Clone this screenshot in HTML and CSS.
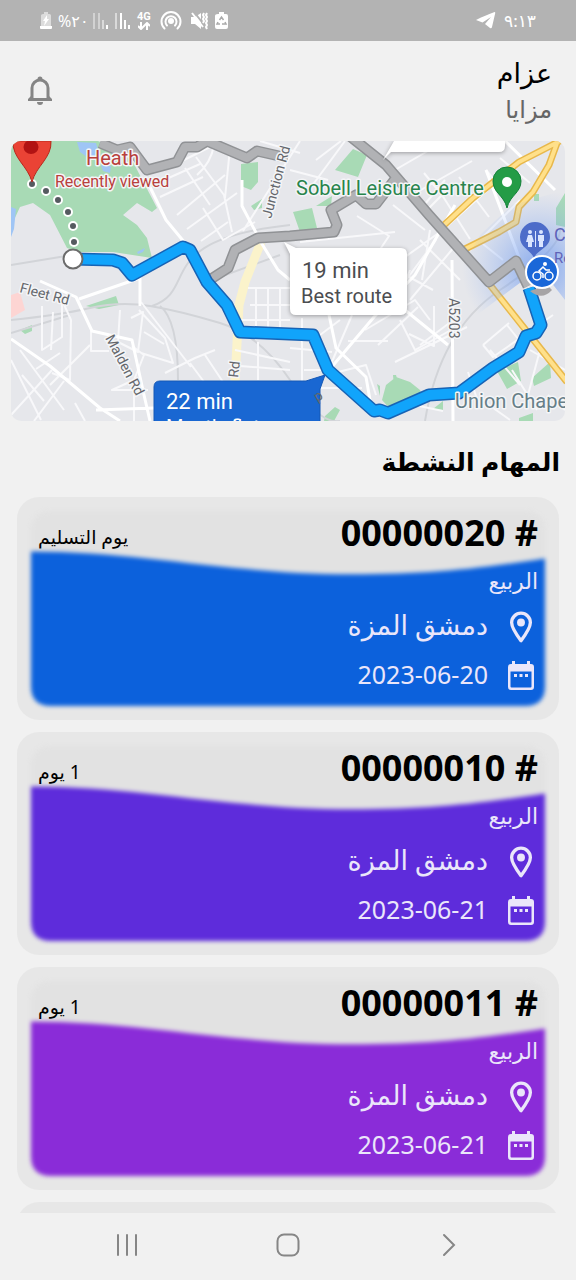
FILE: index.html
```html
<!DOCTYPE html>
<html lang="ar" dir="rtl">
<head>
<meta charset="utf-8">
<meta name="viewport" content="width=device-width, initial-scale=1">
<title>المهام النشطة</title>
<link rel="stylesheet" href="styles.css">
</head>
<body>
<svg class="defs" width="0" height="0" aria-hidden="true">
  <defs>
    <symbol id="pin" viewBox="1 1 22 29"><path fill="none" stroke="currentColor" stroke-width="3" stroke-linejoin="round" d="M12 28C6 20 3.500 15.500 3.500 11.500a8.500 8.500 0 0 1 17 0C20.500 15.500 18 20 12 28z"/><circle cx="12" cy="11.500" r="3.600" fill="currentColor"/></symbol>
    <symbol id="calendar" viewBox="0 0 28 32"><path fill="currentColor" fill-rule="evenodd" d="M4 4H5V1h3v3h12V1h3v3h1a3 3 0 0 1 3 3v20a3 3 0 0 1-3 3H4a3 3 0 0 1-3-3V7a3 3 0 0 1 3-3zM3.500 11.500v15a1 1 0 0 0 1 1h19a1 1 0 0 0 1-1v-15zM7 14h3v3H7zM12.500 14h3v3h-3zM18 14h3v3h-3z"/></symbol>
    <symbol id="wave" viewBox="0 0 514 197" preserveAspectRatio="none"><path fill="currentColor" d="M0 41C110 41 200 64 320 64C400 64 450 58 514 48V177Q514 197 494 197H20Q0 197 0 177Z"/></symbol>
    <symbol id="bars" viewBox="0 0 16 18"><path fill="#dadada" d="M0 1h2v16H0zM5 1h2v16H5z" opacity=".8"/><path fill="#dadada" d="M9 8h2v9H9z"/><path fill="#fff" d="M13 13h2v4h-2z"/></symbol>
  </defs>
</svg>
<div class="status">
  <div class="status-icons">
    <svg width="12" height="18" viewBox="0 0 12 18"><path fill="#dcdcdc" d="M3 2h1V0h4v2h1.500Q11 2 11 3.500V14H1V3.500Q1 2 3 2z"/><path fill="#fff" d="M0 14h12v2q0 1-1 1H1q-1 0-1-1zM7 3 3 9h2l-1 5 5-7H7z"/></svg>
    <span class="battery-level">%٢٠</span>
    <svg width="16" height="18"><use href="#bars"/></svg>
    <svg width="16" height="18" viewBox="0 0 16 18"><path fill="#dadada" d="M0 1h2v16H0z"/><path fill="#fff" d="M5 1h2v16H5zM9 8h2v9H9zM13 13h2v4h-2z"/></svg>
    <div class="network"><span>4G</span><svg width="12" height="8" viewBox="0 0 12 8"><path fill="none" stroke="#fff" stroke-width="2" d="M3 0v6M0 4l3 3 3-3M9 8V2M6 4l3-3 3 3"/></svg></div>
    <svg class="hotspot" width="22" height="20" viewBox="0 0 22 20"><circle cx="11" cy="10" r="3" fill="#fff"/><path fill="none" stroke="#fff" stroke-width="2" stroke-linecap="round" d="M7 14.500a5.500 5.500 0 1 1 8 0M4.500 17.500a9.500 9.500 0 1 1 13 0"/></svg>
    <svg width="18" height="18" viewBox="0 0 18 18"><path fill="#fff" d="M0 5h4L10 1v16l-6-5H0z"/><path stroke="#b3b3b3" stroke-width="2" d="M3 0l11 14"/><path fill="none" stroke="#fff" stroke-width="2" d="M1 1l11 14M13 1l-1 2 1 2-1 2 1 2-1 2M16 1l-1 2 1 2-1 2 1 2-1 2 1 2-1 2 1 2"/></svg>
    <svg width="13" height="18" viewBox="0 0 13 18"><path fill="#fff" d="M3 2h1V0h5v2h2q2 0 2 2v11q0 2-2 2H2q-2 0-2-2V4q0-2 3-2z"/><path fill="none" stroke="#aaa" stroke-width="1.500" d="M4.500 8l2-3 2 3M3 10l-1 2h3M10 10l1 2H7"/></svg>
  </div>
  <div class="status-time">
    <svg width="20" height="17" viewBox="0 0 20 17"><path fill="#fff" d="M0 8Q1 7 18 .2q1.500-.4 1.200 1L16 15q-.5 2-2 1l-5-4 6-7-8.500 5.500z"/></svg>
    <span>٩:١٣</span>
  </div>
</div>

<header class="top">
  <div class="who">
    <div class="name">عزام</div>
    <div class="company">مزايا</div>
  </div>
  <button class="bell" type="button" aria-label="الإشعارات">
    <svg width="26" height="30" viewBox="0 0 26 30"><path fill="none" stroke="#858585" stroke-width="3" d="M5 24V12a8 8 0 0 1 16 0v12"/><path fill="#858585" d="M10.500 4V3a2.500 2.500 0 0 1 5 0v1zM4 20l-3 3v2h24v-2l-3-3v2H4zM10 26h6a3 3 0 0 1-6 0z"/></svg>
  </button>
</header>

<div class="map">
<svg viewBox="11 141 554 280" direction="ltr" role="img" aria-label="Map">
  <defs><radialGradient id="here" gradientUnits="userSpaceOnUse" cx="540" cy="268" r="78"><stop offset="0" stop-color="#5b8def" stop-opacity=".7"/><stop offset="1" stop-color="#8fb2f5" stop-opacity="0"/></radialGradient></defs>
  <path fill="#e6e7eb" d="M11 141h554v280H11z"/>
  <g fill="#a8dab5">
    <path d="M11 141H98L118 150L133 162L157 208L152 212L137 203L123 215L137 225L147 238L152 258L113 252H80L67 248L50 215L33 203L20 207L13 222L11 235z"/>
    <path d="M241 164L258 162V182L251 190L241 186zM251 206L262 199V208L254 210zM353 149L367 155L358 177L335 170zM293 212L312 208L317 228L300 232zM316 206L332 196 331 206zM86 306l30-10 3 9-20 4zM20 330l12-5v6l-7 3z"/>
    <path d="M382 400l4-15 10-8 14 5 10 8 3 8-30 14zM497 371l21-9 3 19-14 8zM532 378l18-16 1 16-17 8zM519 418l14-5v8h-14zM325 416l10-9 5 3-6 11h-10zM556 208l9-15v34l-9-2zM534 194h5v7h-5zM380 386l-3-2 3 12zM393 375l3 0 3 10-5 2zM433 409l10-8v9z"/>
  </g>
  <path fill="#9fc5f5" d="M77 142l19 1 3 10-8 7-11-8zM101 165l10 1-1 7-7-2zM11 207l5 2-2 20-3 8zM137 252l8-4-2 4-5 2z"/>
  <path fill="#fdd5d3" d="M11 295l9-3 5 18-14 8z"/>
  <g fill="none" stroke="#d2d4d8" stroke-width="2">
    <path d="M11 320Q60 315 90 308T150 306T220 323T290 380T340 421M11 265L66 256M152 306C200 290 150 240 290 225M11 333L70 315M160 306Q178 320 178 380M425 421Q440 330 500 290T560 230M220 277l60-22"/>
  </g>
  <path fill="none" stroke="#fbf3cb" stroke-width="9" d="M261 242L245 282L239 305L235 381"/>
  <g fill="none" stroke="#f8f8fa" stroke-width="2" stroke-linejoin="round">
    <path d="M160 197L203 177M177 215L225 175M187 229L237 193M201 241L228 222M168 168L214 145M185 168L210 205M196 157L224 195L232 232M203 208L223 240L255 222M214 145q-3 18-17 30M230 148l-5 50M155 184l45-20M300 141L243 231M345 141l-39 53M290 170l38 10M300 153l-40-12M316 160l25-19M395 170l50-29M412 195l60-34M424 173l18 22-16 16M442 195l28 44M459 177l30 40M446 227l45-40M470 250l50-50M420 210l25-30M430 230l-8 50M393 205l32 25M300 242l95-10M357 216l32 20-20 30M377 277l70-50M406 280l30-40M410 300l50-60M378 260l55 30M478 240l25 20M486 170l25 30M500 158l30 25M460 280l-40-40"/>
    <path d="M11 360l30 60M20 350l44 60M36 369l24-16M50 385L90 345M11 415L52 370M22 375l22 26M34 421l30-40M42 306v44l20-13V300M62 300l9 20-1 60-18-7M53 312l-2 38M91 331v20h18M120 310l-2 32 20 10 5-40-12 6M139 310l26 28 8 25-32-10M144 332l20 12M141 302l50 65M132 346l12 9-10 25-22 10h36M165 373l30-15 20-8M190 363l20 27M205 355l24 36M235 350l55 12M258 342v38M240 366l50 4M248 288h42M250 305h40M256 288v44M268 288v44M280 288v44M240 320h50M134 421v-30M85 421l-10-18"/>
    <path d="M302 318v70h60M290 348l42 4M304 370h26M340 320l-20 15M352 315l-24 56M348 341h40M410 270l-12 30M365 330l50-30 15 20M420 345l40-30M378 345l40-38M434 306v40l-25-12M400 320l15 30 45-25M483 345l26-22M483 345l10 12 60-42M507 325l20 25M490 350l30 35M530 350l35 20M512 370l25 40M540 350l-12 45M468 372l10 30M548 395l17 15M376 395l-10-30-40 10M395 362l72-35M400 402l43 9M482 400l28 20"/>
  </g>
  <g fill="none" stroke="#fff" stroke-width="3" stroke-linejoin="round">
    <path d="M150 187L166 220L185 243M242 180V206L262 244L278 270L290 280M40 281L76 297L92 331L132 340L144 395L150 421M79 299L140 278V306M11 339L50 366L100 408L120 421M96 410L154 408M452 260L453 421M286 421L374 317L415 275L455 205M328 310L336 348L366 377L370 400M405 310L448 345M486 170L520 260M505 141L555 190"/>
  </g>
  <g fill="none" stroke-linejoin="round">
    <g stroke="#e8b84b" stroke-width="7"><path d="M560 141L519 162L473 198L443 226M557 143L549 165L533 192L519 207L516 222L499 232L465 249M490 285L567 382"/></g>
    <g stroke="#ffe08a" stroke-width="4"><path d="M560 141L519 162L473 198L443 226M557 143L549 165L533 192L519 207L516 222L499 232L465 249M490 285L567 382"/></g>
  </g>
  <path fill="url(#here)" d="M540 268L470 320L455 280L480 235L512 205L565 190V300z"/>
  <g fill="none" stroke-linejoin="round">
    <path stroke="#909295" stroke-width="11" d="M100 143L117 150L130 147L147 170L177 162L185 147H197L207 141L247 158L257 151L288 158M211 279L228 268L235 250L258 238L290 236L334 232L337 225L331 210L356 195L366 204L376 204L396 178M346 133L386 165L429 215L489 282L516 261L528 286"/>
    <path stroke="#b1b2b5" stroke-width="8" d="M100 143L117 150L130 147L147 170L177 162L185 147H197L207 141L247 158L257 151L288 158M211 279L228 268L235 250L258 238L290 236L334 232L337 225L331 210L356 195L366 204L376 204L396 178M346 133L386 165L429 215L489 282L516 261L528 286"/>
    <path stroke="#1763b5" stroke-width="13" d="M73 259L113 260L122 263L132 275L183 247L190 250L207 282L227 305L240 332L313 335L328 370L374 411L380 410L388 413L429 395L459 393L493 368L519 352L526 336L536 333L541 325L529 288"/>
    <path stroke="#11a4fb" stroke-width="10" d="M73 259L113 260L122 263L132 275L183 247L190 250L207 282L227 305L240 332L313 335L328 370L374 411L380 410L388 413L429 395L459 393L493 368L519 352L526 336L536 333L541 325L529 288"/>
  </g>
  <circle cx="73" cy="259" r="9.500" fill="#fff" stroke="#6b6b6b" stroke-width="2"/>
  <g fill="#555a60" stroke="#fff" stroke-width="2"><circle cx="32" cy="184" r="4"/><circle cx="46" cy="191" r="4"/><circle cx="58" cy="200" r="4"/><circle cx="68" cy="212" r="4"/><circle cx="73" cy="226" r="4"/><circle cx="74" cy="242" r="4"/></g>
  <path fill="#ea4335" stroke="#b7281c" d="M13 141C12 158 28 166 32 182C36 166 52 158 51 141z"/><ellipse cx="31" cy="147" rx="7.500" ry="7" fill="#b11313"/>
  <path fill="#249c46" stroke="#15803a" d="M507 208C504 195 493 193 493 181a14 14 0 0 1 28 0C521 193 510 195 507 208z"/><circle cx="507" cy="182" r="5" fill="#fff"/>
  <path fill="#4d6cc9" d="M534 258C531 250 520 248 520 237a15 15 0 0 1 30 0C550 248 537 250 534 258z"/>
  <g fill="#dbe5ff"><circle cx="530" cy="232" r="2"/><path d="M528 235h4l2 7h-2v5h-4v-5h-2zM535 231h1v16h-1z"/><circle cx="541" cy="232" r="2"/><path d="M538 235h6v6h-1v6h-4v-6h-1z"/></g>
  <path fill="#a6a4a6" d="M530 291q12 10 22-1l-5-5z"/>
  <circle cx="542" cy="272" r="16" fill="#1a67d8" stroke="#fff" stroke-width="2"/>
  <g fill="none" stroke="#fff" stroke-width="1.500"><circle cx="537" cy="276" r="4"/><circle cx="549" cy="276" r="4"/><path d="M543 278v-4l-4-3 4-4 3 3h4"/></g><circle cx="545" cy="264" r="2" fill="#fff"/>
  <path class="shade" fill="#fff" d="M383 160L394 141H505V146Q505 152 499 152H391z"/>
  <path class="shade" fill="#fff" d="M284 242L296 248H401Q407 248 407 254V308Q407 315 401 315H296Q290 315 290 309V254z"/>
  <path fill="#1967d2" stroke="#1558b5" d="M160 381H306L325 375L320 389V424H154V387Q154 381 160 381z"/>
  <g class="map-text">
    <text class="halo" x="86" y="165" font-size="20" fill="#b8403c">Heath</text>
    <text class="halo" x="55" y="187" font-size="16" fill="#b8403c">Recently viewed</text>
    <text class="halo" x="296" y="195" font-size="20" fill="#28844c">Sobell Leisure Centre</text>
    <text x="302" y="278" font-size="22" fill="#4b4d50">19 min</text>
    <text x="301" y="303" font-size="20" fill="#4b4d50">Best route</text>
    <text x="166" y="409" font-size="22" fill="#fff">22 min</text>
    <text x="166" y="434" font-size="20" fill="#fff">Mostly flat</text>
    <text class="halo" x="455" y="408" font-size="20" fill="#667e88">Union Chapel</text>
    <g font-size="14" fill="#64676c"><text class="halo" transform="translate(19 292) rotate(15)">Fleet Rd</text><text class="halo" transform="translate(105 338) rotate(62)">Malden Rd</text><text class="halo" transform="translate(271 219) rotate(-75)">Junction Rd</text><text class="halo" transform="translate(238 378) rotate(-83)">Rd</text><text class="halo" transform="translate(449 298) rotate(90)">A5203</text><text transform="translate(317 402) rotate(-30)">p</text></g>
    <text x="554" y="241" font-size="18" fill="#5f63b8">C</text><text x="554" y="263" font-size="15" fill="#5f63b8">Ro</text>
  </g>
</svg>
</div>

<h1 class="heading">المهام النشطة</h1>

<ul class="tasks">
  <li class="card blue">
    <svg class="card-art"><rect class="haze" width="100%" height="100%" rx="18"/><use class="wave" href="#wave" width="100%" height="100%"/></svg>
    <div class="card-body">
      <div class="card-top"><h2># 00000020</h2><span class="due">يوم التسليم</span></div>
      <div class="client">الربيع</div>
      <div class="row"><svg><use href="#pin"/></svg><span>دمشق المزة</span></div>
      <div class="row"><svg><use href="#calendar"/></svg><time>2023-06-20</time></div>
    </div>
  </li>
  <li class="card indigo">
    <svg class="card-art"><rect class="haze" width="100%" height="100%" rx="18"/><use class="wave" href="#wave" width="100%" height="100%"/></svg>
    <div class="card-body">
      <div class="card-top"><h2># 00000010</h2><span class="due">1 يوم</span></div>
      <div class="client">الربيع</div>
      <div class="row"><svg><use href="#pin"/></svg><span>دمشق المزة</span></div>
      <div class="row"><svg><use href="#calendar"/></svg><time>2023-06-21</time></div>
    </div>
  </li>
  <li class="card purple">
    <svg class="card-art"><rect class="haze" width="100%" height="100%" rx="18"/><use class="wave" href="#wave" width="100%" height="100%"/></svg>
    <div class="card-body">
      <div class="card-top"><h2># 00000011</h2><span class="due">1 يوم</span></div>
      <div class="client">الربيع</div>
      <div class="row"><svg><use href="#pin"/></svg><span>دمشق المزة</span></div>
      <div class="row"><svg><use href="#calendar"/></svg><time>2023-06-21</time></div>
    </div>
  </li>
  <li class="card next"></li>
</ul>

<nav class="system-nav">
  <button type="button" aria-label="Recent apps"><svg width="24" height="24" viewBox="0 0 24 24"><path d="M3 2v20M12 2v20M21 2v20"/></svg></button>
  <button type="button" aria-label="Home"><svg width="24" height="24" viewBox="0 0 24 24"><rect x="1.500" y="1.500" width="21" height="21" rx="6.500"/></svg></button>
  <button type="button" aria-label="Back"><svg width="24" height="24" viewBox="0 0 24 24"><path d="M7 2l10 10L7 22"/></svg></button>
</nav>
</body>
</html>
```

FILE: styles.css
```css
* { box-sizing: border-box; }

body {
  margin: 0;
  height: 100vh;
  display: flex;
  flex-direction: column;
  background: #f1f1f1;
  color: #000;
  font-family: "Noto Sans", "DejaVu Sans", sans-serif;
}

svg { display: block; flex: none; }
.defs { position: absolute; }
button { border: 0; padding: 0; background: none; display: grid; place-items: center; }
h1, h2, ul { margin: 0; padding: 0; }

.status {
  flex: none;
  height: 41px;
  padding: 0 40px;
  display: flex;
  justify-content: space-between;
  align-items: center;
  direction: ltr;
  background: #b3b3b3;
  color: #fff;
  font-size: 17px;
}
.status-icons { display: flex; align-items: center; gap: 6px; }
.status-time { display: flex; align-items: center; gap: 8px; }
.battery-level { width: 29px; font-size: 16px; white-space: nowrap; }
.network { display: grid; justify-items: center; font: bold 11px/11px Roboto, sans-serif; }
.hotspot { margin: 0 3px; }

.top {
  flex: none;
  height: 100px;
  padding: 14px 24px 0 27px;
  display: flex;
  justify-content: space-between;
}
.name { font-size: 27px; line-height: 36px; }
.company { font-size: 24px; line-height: 36px; color: #666; }
.bell { width: 26px; height: 72px; }

.map { flex: none; margin: 0 11px; border-radius: 10px; overflow: hidden; }
.map svg { width: 100%; height: auto; }
.map-text { font-family: Roboto, sans-serif; direction: ltr; }
.halo { paint-order: stroke; stroke: #f4f5f7; stroke-width: 3px; stroke-linejoin: round; }
.shade { filter: drop-shadow(0 1px 2px #0005); }

.heading {
  flex: none;
  padding: 20px 16px 16px;
  font-size: 25px;
  line-height: 40px;
}

.tasks {
  flex: 1;
  min-height: 0;
  overflow-y: auto;
  scrollbar-width: none;
  padding: 0 17px;
  display: flex;
  flex-direction: column;
  gap: 12px;
  list-style: none;
}
.card { position: relative; flex: none; border-radius: 22px; background: #e7e7e7; }
.next { height: 223px; }
.card-art {
  position: absolute;
  inset: 14px;
  width: calc(100% - 28px);
  height: calc(100% - 28px);
  overflow: visible;
  filter: blur(2px);
}
.haze { fill: #e2e2e2; }
.blue { color: #0c61dc; }
.indigo { color: #5e2cdb; }
.purple { color: #8a2cd8; }

.card-body {
  position: relative;
  padding: 16px 21px 28px;
  display: grid;
  gap: 13px;
  color: #eae6fa;
}
.card-top { display: flex; justify-content: space-between; align-items: center; height: 40px; color: #000; }
.card-top h2 { font-size: 36px; line-height: 40px; }
.due { padding-top: 8px; font-size: 19px; line-height: 24px; }
.client { font-size: 22px; line-height: 28px; }
.row { display: flex; align-items: center; gap: 16px; height: 36px; font-size: 27px; line-height: 32px; }
.row svg { width: 34px; height: 32px; margin-top: 4px; }
.row time { font-size: 25px; }

.system-nav {
  flex: none;
  height: 67px;
  padding: 0 46px 3px;
  display: grid;
  grid-template-columns: repeat(3, 1fr);
  direction: ltr;
}
.system-nav svg { fill: none; stroke: #868686; stroke-width: 2; stroke-linecap: round; }
```
